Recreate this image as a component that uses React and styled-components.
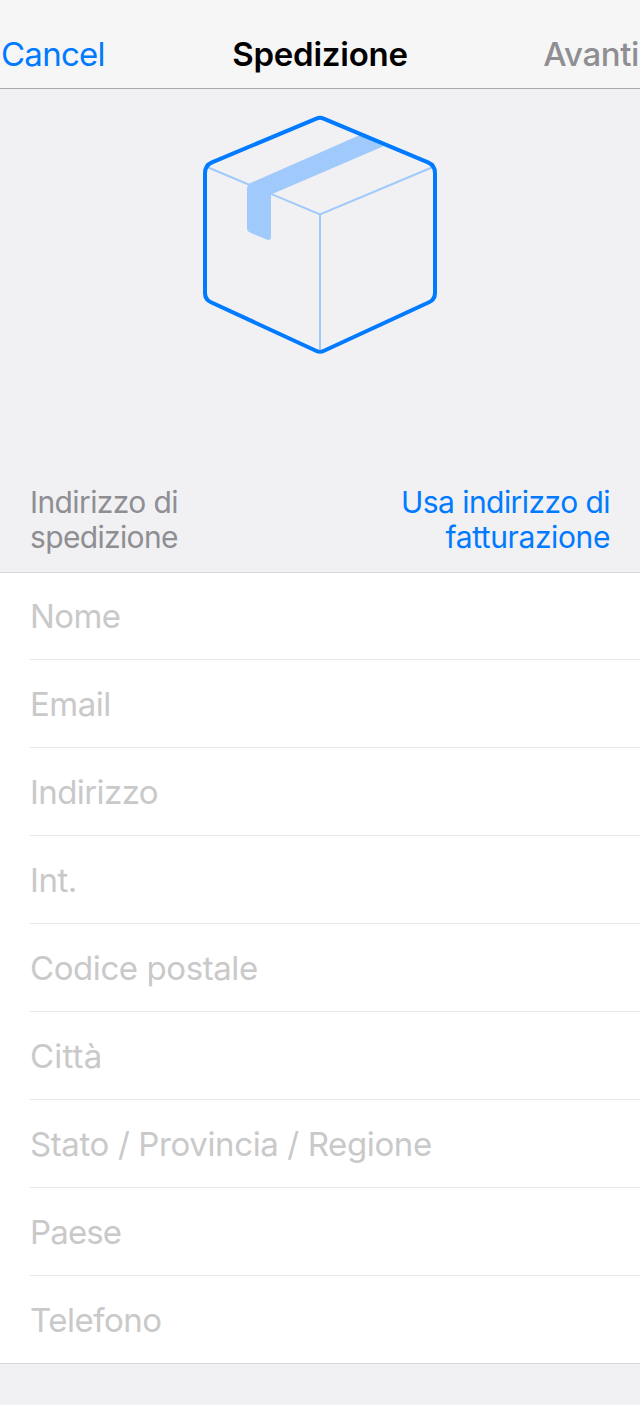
import React from "react";
import styled, { createGlobalStyle } from "styled-components";

const GlobalStyle = createGlobalStyle`
  * { box-sizing: border-box; }
  body {
    margin: 0;
    background: #f1f1f4;
    font-family: Inter, "Liberation Sans", sans-serif;
    -webkit-font-smoothing: antialiased;
  }
  button { border: 0; padding: 0; background: none; font: inherit; }
`;

const Screen = styled.main`
  width: 640px;
  height: 1405px;
  overflow: hidden;
  display: flex;
  flex-direction: column;
  background: #f1f1f4;
`;

const NavBar = styled.header`
  height: 89px;
  flex: none;
  display: grid;
  grid-template-columns: 1fr auto 1fr;
  padding: 34px 1px 0;
  background: #f6f6f6;
  border-bottom: 1px solid #a8a8aa;
  line-height: 40px;
`;

const NavButton = styled.button`
  justify-self: ${(p) => p.$side};
  height: 40px;
  font-size: 33px;
  font-weight: ${(p) => p.$weight || 400};
  line-height: 40px;
  white-space: nowrap;
  color: ${(p) => p.$color};
  letter-spacing: ${(p) => p.$spacing || 0}px;
`;

const Title = styled.h1`
  margin: 0;
  font-size: 33px;
  font-weight: 600;
  line-height: 40px;
  letter-spacing: ${(p) => p.$spacing}px;
`;

const Hero = styled.section`
  display: flex;
  justify-content: center;
  height: 396px;
  flex: none;
  padding-top: 21px;
`;

const SectionHeader = styled.div`
  display: flex;
  justify-content: space-between;
  height: 87px;
  flex: none;
  padding: 0 30px;
  font-size: 30px;
  line-height: 35px;
`;

const HeaderText = styled.div`
  display: flex;
  flex-direction: column;
  align-items: ${(p) => p.$align};
  color: ${(p) => p.$color};
`;

const HeaderLine = styled.span`
  letter-spacing: ${(p) => p.$spacing}px;
`;

const Form = styled.div`
  flex: none;
  background: #fff;
  border-top: 1px solid #d8d8da;
  border-bottom: 1px solid #d8d8da;
`;

const Field = styled.div`
  height: ${(p) => (p.$first || p.$last ? 87 : 88)}px;
  margin-left: 30px;
  padding-top: ${(p) => (p.$first ? 23 : 24)}px;
  border-bottom: ${(p) => (p.$last ? "0" : "1px solid #e8e8e9")};
  color: #c9c9ca;
  font-size: 33px;
  line-height: 40px;
  letter-spacing: ${(p) => p.$spacing}px;
`;

const fields = [
  ["Nome", -0.6],
  ["Email", -0.5],
  ["Indirizzo", -0.58],
  ["Int.", -0.45],
  ["Codice postale", -0.42],
  ["Città", 0.15],
  ["Stato / Provincia / Regione", -0.38],
  ["Paese", -0.85],
  ["Telefono", -0.5],
];

const BoxIcon = () => (
  <svg width="240" height="250" viewBox="200 110 240 250" fill="none" aria-hidden="true">
    <path
      d="M207 167 L320 214.5 L433 167 M320 214.5 V351"
      stroke="#9fcafb"
      strokeWidth="2"
    />
    <path
      d="M360 135 L251 182.7 Q247 184.5 247 189 V228 Q247 231.3 250 232.6 L266.5 239.6 Q271 241.3 271 236.8 V194.6 L384 146 Z"
      fill="#9fcafb"
    />
    <path
      d="M317 118.3 Q320 117 323 118.3 L428 162.4 Q435 165.3 435 173 V293 Q435 299.5 429 302.3 L323.5 351 Q320 352.6 316.5 351 L211 302.3 Q205 299.5 205 293 V173 Q205 165.3 212 162.4 Z"
      stroke="#007aff"
      strokeWidth="4"
    />
  </svg>
);

export default function App() {
  return (
    <>
      <GlobalStyle />
      <Screen>
        <NavBar>
          <NavButton $side="start" $color="#007aff" $spacing={-0.75}>Cancel</NavButton>
          <Title $spacing={-0.22}>Spedizione</Title>
          <NavButton $side="end" $color="#8e8e93" $weight={500} $spacing={-0.4}>Avanti</NavButton>
        </NavBar>
        <Hero>
          <BoxIcon />
        </Hero>
        <SectionHeader>
          <HeaderText $align="flex-start" $color="#8e8e93">
            <HeaderLine $spacing={-0.6}>Indirizzo di</HeaderLine>
            <HeaderLine $spacing={-0.65}>spedizione</HeaderLine>
          </HeaderText>
          <HeaderText $align="flex-end" $color="#007aff">
            <HeaderLine $spacing={-0.55}>Usa indirizzo di</HeaderLine>
            <HeaderLine $spacing={-0.4}>fatturazione</HeaderLine>
          </HeaderText>
        </SectionHeader>
        <Form>
          {fields.map(([label, spacing], i) => (
            <Field
              key={label}
              $spacing={spacing}
              $first={i === 0}
              $last={i === fields.length - 1}
            >
              {label}
            </Field>
          ))}
        </Form>
      </Screen>
    </>
  );
}
